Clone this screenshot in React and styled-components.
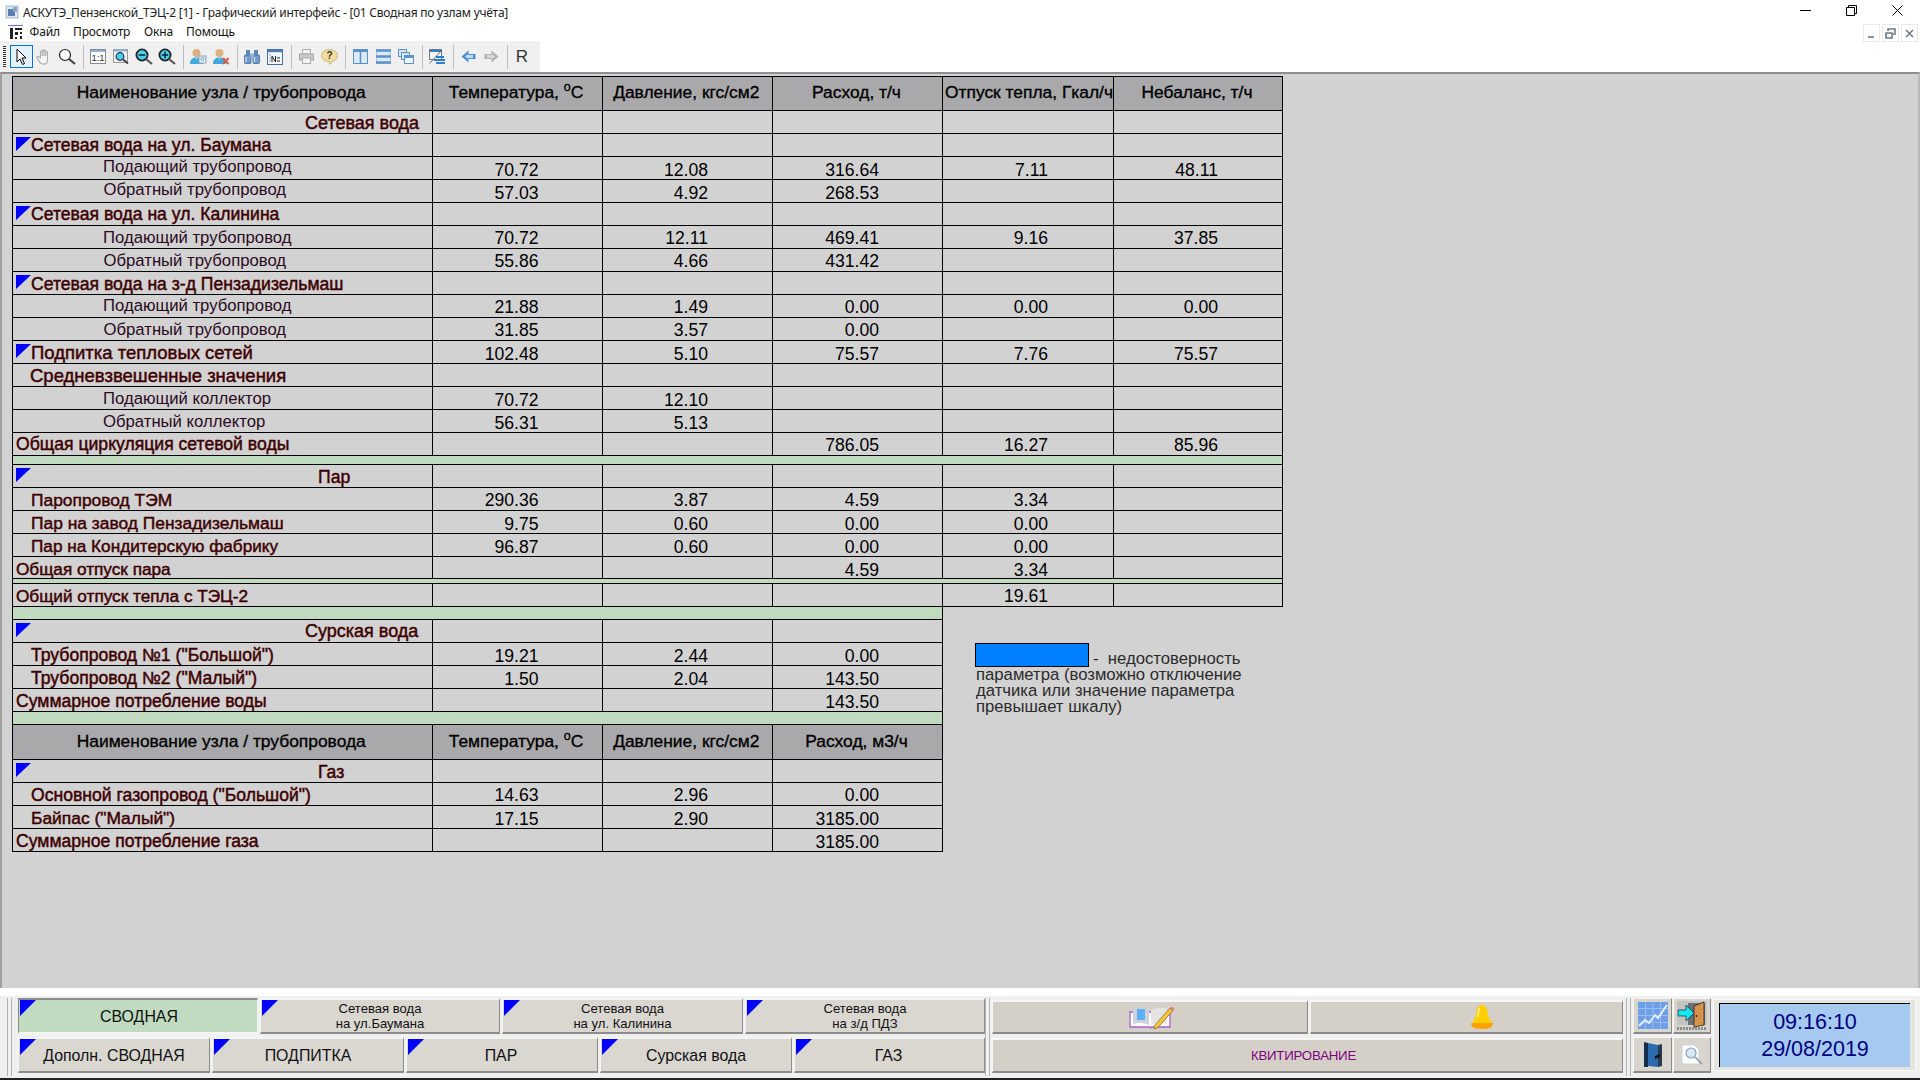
import React from 'react';
import styled, { createGlobalStyle } from 'styled-components';

const Global = createGlobalStyle`
  html, body { margin: 0; padding: 0; background: #fff; }
  body { font-family: "Liberation Sans", Arial, sans-serif; }
  * { box-sizing: border-box; }
`;

const Screen = styled.div`
  position: relative; width: 1920px; height: 1080px; overflow: hidden; background: #fff;
`;
const TitleBar = styled.div`
  display: flex; align-items: center; height: 22px; padding-left: 5px; padding-top: 2px;
  font: 12px "Noto Sans", sans-serif; color: #222;
`;
const TitleText = styled.span` margin-left: 4px; letter-spacing: -0.02em; `;
const WinControls = styled.div`
  position: absolute; top: 0; right: 0; display: flex;
`;
const WinBtn = styled.div`
  width: 46px; height: 20px; display: flex; align-items: center; justify-content: center;
`;
const MenuBar = styled.div`
  position: relative; display: flex; height: 19px; align-items: center;
  font: 12px "Noto Sans", sans-serif; color: #111; padding-left: 8px;
`;
const MenuItem = styled.span` position: absolute; left: ${p => p.$x}px; letter-spacing: -0.01em; `;
const MdiGroup = styled.div`
  position: absolute; right: 2px; top: 2px; display: flex; gap: 2px;
`;
const MdiBtn = styled.div`
  width: 17px; height: 18px; border: 1px solid #eaeaea; display: flex; align-items: center; justify-content: center;
`;
const Toolbar = styled.div`
  position: absolute; left: 0; top: 41px; width: 540px; height: 31px; background: #f0f0f0;
  display: flex; align-items: center; padding-left: 9.5px;
  &::before {
    content: ''; position: absolute; left: 3px; top: 5px; width: 3px; height: 21px;
    background: repeating-linear-gradient(to bottom, #333 0 1px, transparent 1px 2px);
  }
`;
const ToolBtn = styled.div`
  width: 23px; height: 23px; display: flex; align-items: center; justify-content: center;
  border: 1px solid ${p => p.$active ? '#0078d7' : 'transparent'};
  background: ${p => p.$active ? '#e5f1fb' : 'transparent'};
  font: 17px "Liberation Sans", sans-serif; color: #333;
`;
const ToolSep = styled.div` width: 1px; height: 24px; background: #bdbdbd; margin: 0 3px 0 4px; `;

const Workspace = styled.div`
  position: absolute; left: 0; right: 0; top: 72px; height: 916px; background: #d2d2d2;
  border-top: 2px solid #8e8e8e; border-left: 2px solid #a0a0a0; border-right: 2px solid #b8b8b8;
`;
const Grid = styled.div` position: absolute; left: 12px; top: 76px; width: 1272px; color: #000; `;
const Row = styled.div`
  position: relative; display: flex; height: ${p => p.$h}px;
  background: ${p => p.$green ? '#c0dac0' : 'transparent'};
  width: ${p => p.$short ? 931 : 1271}px;
  border-left: 1px solid #000;
  border-bottom: 1px solid #000;
  ${p => p.$top ? 'border-top: 1px solid #000;' : ''}
  ${p => p.$green ? 'border-right: 1px solid #000;' : ''}
`;
const W = [419.5, 170, 170.5, 170, 171, 169];
const Cell = styled.div`
  position: relative; flex: none; width: ${p => W[p.$c]}px; height: 100%;
  border-right: 1px solid #000; white-space: nowrap;
  background: ${p => p.$head ? '#a9a9ab' : 'transparent'};
  display: flex; align-items: center;
`;
const Value = styled.span`
  position: absolute; right: ${p => [0, 63, 64, 63, 65, 64][p.$c]}px; top: ${p => 4 + (p.$dy ?? 0)}px;
  font-size: 17.6px; line-height: 18px; color: #000;
`;
const Name = styled.span`
  position: absolute; left: ${p => p.$x - 13}px; top: ${p => 2 + (p.$dy ?? 1)}px; line-height: 18px;
  font-size: ${p => p.$fs ?? (p.$strong ? 17.6 : 16.7)}px;
  color: ${p => p.$strong ? '#3d0000' : '#2a0a1e'};
  -webkit-text-stroke: ${p => p.$strong ? '0.45px' : '0'} #3d0000;
`;
const HeadText = styled.span`
  width: 100%; text-align: center; font-size: 17.4px; color: #000; padding: 0 2px 2px 0;
  -webkit-text-stroke: 0.35px #000;
  sup { font-size: 12.5px; line-height: 0; vertical-align: 7px; }
`;
const OverflowHead = styled(HeadText)`
  text-align: left; padding: 0 0 2px 2px;
`;
const Flag = styled.i`
  position: absolute; left: ${p => p.$x}px; top: ${p => p.$y}px;
  width: ${p => p.$w ?? 16}px; height: ${p => p.$w ? p.$w - 1 : 16}px; background: #0000ff;
  clip-path: polygon(0 0, 100% 0, 0 100%);
`;

const Legend = styled.div`
  position: absolute; left: 975px; top: 643px; width: 290px; color: #2b2b2b;
  font-size: 16.7px; line-height: 15.9px;
`;
const LegendBox = styled.i`
  display: inline-block; width: 114px; height: 24px; background: #0080ff; border: 1px solid #000;
  vertical-align: top; margin-right: 4px; flex: none;
`;
const LegendFirst = styled.div` height: 24px; display: flex; align-items: flex-start; `;
const LegendDash = styled.span` padding-top: 8px; white-space: pre; `;
const LegendBody = styled.div` padding-left: 1px; white-space: nowrap; `;

const Bottom = styled.div`
  position: absolute; left: 0; right: 0; top: 996px; height: 82px; background: #f0f0f0;
`;
const Dark = styled.div` position: absolute; left: 0; right: 0; top: 1078px; height: 2px; background: #222; `;
const Grip = styled.div`
  position: absolute; left: ${p => p.$x}px; top: 2px; height: 78px; width: 5px;
  border-left: 1px solid #b4b4b4; border-right: 1px solid #b4b4b4;
`;
const TabRow = styled.div`
  position: absolute; left: 18px; top: ${p => p.$y}px; display: flex; gap: 2px;
`;
const Tab = styled.div`
  position: relative; width: ${p => p.$w}px; height: ${p => p.$h}px;
  background: ${p => p.$on ? '#c0dbc0' : '#dad7d1'};
  border-top: 2px solid ${p => p.$on ? '#8c8c8c' : '#f4f4f2'};
  border-left: 1px solid ${p => p.$on ? '#8c8c8c' : '#f4f4f2'};
  border-bottom: 2px solid ${p => p.$on ? '#f4f4f2' : '#8c8c8c'};
  border-right: 1px solid ${p => p.$on ? '#f4f4f2' : '#8c8c8c'};
  display: flex; align-items: center; justify-content: center; text-align: center;
  font-size: ${p => p.$small ? 13.1 : 15.9}px; line-height: 15px; color: #111;
  padding-left: ${p => p.$pl ?? 0}px; padding-right: ${p => p.$pr ?? 0}px;
`;
const ActionRow = styled.div`
  position: absolute; left: 992px; top: ${p => p.$y}px; display: flex; gap: 2px;
`;
const ActionBtn = styled.div`
  width: ${p => p.$w}px; height: ${p => p.$h}px; background: #d4d0c8;
  border-top: 2px solid #f6f6f4; border-left: 1px solid #f6f6f4;
  border-bottom: 2px solid #8a8a8a; border-right: 1px solid #8a8a8a;
  display: flex; align-items: center; justify-content: center;
  color: #800080; font-size: 13.3px; letter-spacing: -0.25px;
  padding-left: ${p => p.$pl ?? 0}px; padding-right: ${p => p.$pr ?? 0}px;
`;
const SmallBtns = styled.div`
  position: absolute; left: 1633px; top: 2px; width: 78px;
  display: grid; grid-template-columns: 39px 38px; grid-auto-rows: 36px; gap: 3px 1px;
`;
const SmallBtn = styled.div`
  background: #d8d5ce; border-top: 1px solid #f6f6f4; border-left: 1px solid #f6f6f4;
  border-bottom: 2px solid #8a8a8a; border-right: 1px solid #8a8a8a;
  display: flex; align-items: center; justify-content: center;
`;
const ClockOuter = styled.div`
  position: absolute; left: 1713px; top: 3px; width: 203px; height: 72px; background: #e4e4e0;
  border: 1px solid #f8f8f8; padding: 3px 5px;
`;
const Clock = styled.div`
  height: 64px; background: #a6c9f0; border-top: 1px solid #000; border-left: 1px solid #000;
  display: flex; flex-direction: column; justify-content: center; align-items: center;
  color: #000080; font-size: 21.5px; line-height: 26.5px;
`;

const Ico = styled.svg` display: block; flex: none; `;

const rows = [
  { type: 'head', h: 35, top: true },
  { h: 23, n: 'Сетевая вода', x: 305, s: 1, fs: 18 },
  { h: 23, n: 'Сетевая вода на ул. Баумана', x: 31, s: 1, flag: 1, dy: 0 },
  { h: 23, n: 'Подающий трубопровод', x: 103, v: ['70.72', '12.08', '316.64', '7.11', '48.11'], dy: -1 },
  { h: 23, n: 'Обратный трубопровод', x: 103.5, v: ['57.03', '4.92', '268.53'], dy: -1 },
  { h: 23, n: 'Сетевая вода на ул. Калинина', x: 31, s: 1, flag: 1, dy: 0 },
  { h: 23, n: 'Подающий трубопровод', x: 103, vdy: -1, v: ['70.72', '12.11', '469.41', '9.16', '37.85'] },
  { h: 23, n: 'Обратный трубопровод', x: 103.5, vdy: -1, v: ['55.86', '4.66', '431.42'] },
  { h: 23, n: 'Сетевая вода на з-д Пензадизельмаш', x: 31, s: 1, flag: 1 },
  { h: 23, n: 'Подающий трубопровод', x: 103, dy: 0, vdy: -1, v: ['21.88', '1.49', '0.00', '0.00', '0.00'] },
  { h: 23, n: 'Обратный трубопровод', x: 103.5, vdy: -1, v: ['31.85', '3.57', '0.00'] },
  { h: 23, n: 'Подпитка тепловых сетей', x: 31, s: 1, fs: 18.5, flag: 1, v: ['102.48', '5.10', '75.57', '7.76', '75.57'] },
  { h: 23, n: 'Средневзвешенные значения', x: 30, s: 1, fs: 18.5 },
  { h: 23, n: 'Подающий коллектор', x: 103, v: ['70.72', '12.10'] },
  { h: 23, n: 'Обратный коллектор', x: 103, v: ['56.31', '5.13'] },
  { h: 23, n: 'Общая циркуляция сетевой воды', x: 16, s: 1, dy: 0, vdy: -1, v: ['', '', '786.05', '16.27', '85.96'] },
  { type: 'green', h: 9 },
  { h: 23, n: 'Пар', x: 318, s: 1, flag: 1 },
  { h: 23, n: 'Паропровод ТЭМ', x: 31, s: 1, fs: 17.4, vdy: -1, v: ['290.36', '3.87', '4.59', '3.34'] },
  { h: 23, n: 'Пар на завод Пензадизельмаш', x: 31, s: 1, fs: 17.4, v: ['9.75', '0.60', '0.00', '0.00'] },
  { h: 23, n: 'Пар на Кондитерскую фабрику', x: 31, s: 1, fs: 17.2, v: ['96.87', '0.60', '0.00', '0.00'] },
  { h: 22, n: 'Общая отпуск пара', x: 16, s: 1, fs: 17.2, v: ['', '', '4.59', '3.34'] },
  { type: 'green', h: 5 },
  { h: 23, n: 'Общий отпуск тепла с ТЭЦ-2', x: 16, s: 1, fs: 17.2, vdy: -1, v: ['', '', '', '19.61'] },
  { type: 'green', h: 13, short: 1 },
  { h: 23, n: 'Сурская вода', x: 305, s: 1, fs: 18, flag: 1, short: 1, dy: 0 },
  { h: 23, n: 'Трубопровод №1 ("Большой")', x: 31, s: 1, short: 1, v: ['19.21', '2.44', '0.00'] },
  { h: 23, n: 'Трубопровод №2 ("Малый")', x: 31, s: 1, short: 1, v: ['1.50', '2.04', '143.50'] },
  { h: 23, n: 'Суммарное потребление воды', x: 16, s: 1, short: 1, v: ['', '', '143.50'] },
  { type: 'green', h: 13, short: 1 },
  { type: 'head2', h: 35 },
  { h: 23, n: 'Газ', x: 318, s: 1, flag: 1, short: 1 },
  { h: 23, n: 'Основной газопровод ("Большой")', x: 31, s: 1, short: 1, vdy: -1, v: ['14.63', '2.96', '0.00'] },
  { h: 23, n: 'Байпас ("Малый")', x: 31, s: 1, fs: 17.4, short: 1, v: ['17.15', '2.90', '3185.00'] },
  { h: 23, n: 'Суммарное потребление газа', x: 16, s: 1, short: 1, v: ['', '', '3185.00'] },
];

function TableRow({ r }) {
  if (r.type === 'green') return <Row $h={r.h} $green $short={r.short} />;
  if (r.type === 'head' || r.type === 'head2') {
    const short = r.type === 'head2';
    return (
      <Row $h={r.h} $short={short} $top={r.top}>
        <Cell $c={0} $head><HeadText>Наименование узла / трубопровода</HeadText></Cell>
        <Cell $c={1} $head><HeadText>Температура, <sup>o</sup>C</HeadText></Cell>
        <Cell $c={2} $head><HeadText>Давление, кгс/см2</HeadText></Cell>
        <Cell $c={3} $head><HeadText>{short ? 'Расход, м3/ч' : 'Расход, т/ч'}</HeadText></Cell>
        {!short && <Cell $c={4} $head><OverflowHead>Отпуск тепла, Гкал/ч</OverflowHead></Cell>}
        {!short && <Cell $c={5} $head><HeadText>Небаланс, т/ч</HeadText></Cell>}
      </Row>
    );
  }
  const count = r.short ? 4 : 6;
  return (
    <Row $h={r.h} $short={r.short}>
      <Cell $c={0}>
        {r.flag && <Flag $x={2.5} $y={3} $w={15.5} />}
        <Name $x={r.x} $strong={r.s} $dy={r.dy} $fs={r.fs}>{r.n}</Name>
      </Cell>
      {Array.from({ length: count - 1 }, (_, i) => (
        <Cell key={i} $c={i + 1}>{r.v && r.v[i] ? <Value $c={i + 1} $dy={r.vdy}>{r.v[i]}</Value> : null}</Cell>
      ))}
    </Row>
  );
}

const IconCursor = () => (
  <Ico width="16" height="18" viewBox="0 0 16 18"><path d="M4 1v13l3-3 2.5 5.5 2-1L9 10h4z" fill="#fff" stroke="#000" strokeWidth="1" /></Ico>
);
const IconHand = () => (
  <Ico width="16" height="18" viewBox="0 0 18 20"><path d="M5 11V4.5a1 1 0 0 1 2 0V9V3a1 1 0 0 1 2 0v6V3.5a1 1 0 0 1 2 0V9V5a1 1 0 0 1 2 0v8c0 3-2 5-5 5-2.500 0-3.500-1-5-4l-2-3.500c-.5-1 .8-1.800 1.500-1z" fill="#f4f4f4" stroke="#a8a8a8" strokeWidth="1.200" /></Ico>
);
const Lens = ({ fill = 'none', ring = '#222', sign }) => (
  <Ico width="18" height="17" viewBox="0 0 18 17">
    <circle cx="7" cy="7" r={fill === 'none' ? 5.5 : 5.6} fill={fill === 'none' ? '#fff' : fill} stroke={ring} strokeWidth={fill === 'none' ? 1.2 : 1.8} />
    <path d="M11 11l6 5" stroke={fill === 'none' ? '#444' : '#555'} strokeWidth="2.200" />
    {sign === '-' && <path d="M3.800 7h6.400" stroke="#123" strokeWidth="1.500" />}
    {sign === '+' && <path d="M3.800 7h6.400M7 3.800v6.400" stroke="#123" strokeWidth="1.500" />}
  </Ico>
);
const Icon11 = () => (
  <Ico width="16" height="15" viewBox="0 0 16 15">
    <rect x=".5" y=".5" width="15" height="14" fill="#fff" stroke="#8a8a8a" />
    <path d="M1 2h14" stroke="#8fb4dc" strokeWidth="2" />
    <text x="8" y="12" textAnchor="middle" fontSize="9.500" fontFamily="Liberation Sans" fill="#333">1:1</text>
  </Ico>
);
const IconZoomPage = () => (
  <Ico width="16" height="15" viewBox="0 0 16 15">
    <rect x=".5" y=".5" width="14" height="13" fill="#eee" stroke="#9a9a9a" />
    <path d="M1 1.500h13" stroke="#8fb4dc" strokeWidth="2" />
    <circle cx="7" cy="7.500" r="3.800" fill="#4ccfee" stroke="#234" strokeWidth="1.200" />
    <path d="M10 10.500l5 4" stroke="#444" strokeWidth="2" />
  </Ico>
);
const Person = ({ extra }) => (
  <Ico width="18" height="17" viewBox="0 0 18 17">
    <circle cx="7.500" cy="5" r="4" fill="#dcb080" />
    <path d="M1 16c0-4 2-6.500 6.500-6.500S13 12 14 16z" fill="#3fa8dc" />
    <path d="M7 10l.5 2 .5-2z" fill="#fff" />
    {extra === 'x' && <path d="M11 10l5.500 6M16.500 10L11 16" stroke="#d0604a" strokeWidth="2" />}
    {extra === 'k' && <g><rect x="10" y="8" width="7" height="7" fill="#eaf0f8" stroke="#8aa6c8" /><circle cx="13.500" cy="11" r="1.500" fill="none" stroke="#7a9ac0" /></g>}
  </Ico>
);
const IconBinoc = () => (
  <Ico width="16" height="15" viewBox="0 0 16 15">
    <rect x=".5" y="6" width="6.500" height="8.500" rx="1" fill="#6f9cc8" stroke="#3c6c9c" strokeWidth=".8" />
    <rect x="9" y="6" width="6.500" height="8.500" rx="1" fill="#6f9cc8" stroke="#3c6c9c" strokeWidth=".8" />
    <rect x="2" y="1" width="4" height="5.500" fill="#5a88b8" />
    <rect x="10" y="1" width="4" height="5.500" fill="#5a88b8" />
    <rect x="6.500" y="4" width="3" height="5" fill="#9ab8d4" />
    <path d="M2 8v5M10.500 8v5" stroke="#d8e6f2" strokeWidth="1.200" />
  </Ico>
);
const IconNo = () => (
  <Ico width="16" height="16" viewBox="0 0 16 16">
    <rect x=".5" y=".5" width="15" height="15" fill="#f3f6fa" stroke="#4a6f9a" />
    <path d="M1 2h14" stroke="#4a7db4" strokeWidth="2.400" />
    <path d="M5 13V7l3.500 6V7" stroke="#222" fill="none" />
    <path d="M10 9h3M10 12h3" stroke="#222" />
    <path d="M2 6h2M2 9h2M2 12h2" stroke="#8aa8c8" />
  </Ico>
);
const IconPrint = () => (
  <Ico width="15" height="15" viewBox="0 0 15 15">
    <rect x="3.500" y=".5" width="8" height="4.500" fill="#f4f4f4" stroke="#aaa" />
    <rect x=".5" y="5" width="14" height="6" fill="#c8c8c8" stroke="#a8a8a8" />
    <rect x="3.500" y="9" width="8" height="5.500" fill="#f4f4f4" stroke="#aaa" />
  </Ico>
);
const IconHelp = () => (
  <Ico width="17" height="16" viewBox="0 0 17 16">
    <path d="M8.500.5c4.500 0 8 2.500 8 6s-2.500 5-4.800 5.800L8.500 15.500V12.500C4 12.500.5 10 .5 6.500S4 .5 8.500.5z" fill="#f2dd9a" stroke="#c8b880" />
    <text x="8.500" y="10" textAnchor="middle" fontSize="10" fontWeight="700" fontFamily="Liberation Sans" fill="#333">?</text>
  </Ico>
);
const IconCols = () => (
  <Ico width="15" height="15" viewBox="0 0 15 15">
    <rect x=".5" y=".5" width="14" height="14" fill="#dbe8f6" stroke="#5b93c9" />
    <path d="M1 2h13" stroke="#5b93c9" strokeWidth="2" /><path d="M7.500 1v13" stroke="#5b93c9" strokeWidth="1.600" />
  </Ico>
);
const IconRows = () => (
  <Ico width="15" height="15" viewBox="0 0 15 15">
    <rect x=".5" y=".5" width="14" height="14" fill="#dbe8f6" stroke="#aac4de" />
    <path d="M0 1.500h15M0 7.500h15M0 13.500h15" stroke="#5b93c9" strokeWidth="2.600" />
  </Ico>
);
const IconCascade = () => (
  <Ico width="16" height="15" viewBox="0 0 16 15">
    <rect x=".5" y=".5" width="8" height="7" fill="#d6e6f6" stroke="#5b93c9" />
    <rect x="3.500" y="3.500" width="8" height="7" fill="#d6e6f6" stroke="#5b93c9" />
    <rect x="6.500" y="6.500" width="9" height="8" fill="#eef5fc" stroke="#5b93c9" />
    <path d="M7 8h8" stroke="#5b93c9" strokeWidth="2" />
  </Ico>
);
const IconSwitch = () => (
  <Ico width="16" height="15" viewBox="0 0 16 15">
    <rect x=".5" y=".5" width="12" height="10" fill="#f4f4f4" stroke="#777" />
    <path d="M1 2h11" stroke="#2c7fd0" strokeWidth="2" />
    <path d="M.5 14.500L13 1" stroke="#666" />
    <path d="M7 8h8M5 11h11M7 14h9" stroke="#2c7fd0" strokeWidth="2" />
  </Ico>
);
const IconBack = ({ c = '#4b8fd0', flip }) => (
  <Ico width="15" height="13" viewBox="0 0 15 13" style={flip ? { transform: 'scaleX(-1)' } : undefined}>
    <path d="M.5 6.500l7-6V4h7v5h-7v3.500z" fill={c} />
    <path d="M4 6.500l3-2.500v1h5v3H7v1z" fill={flip ? '#d8d8d8' : '#bcdcf6'} />
  </Ico>
);
const IconBook = () => (
  <Ico width="46" height="25" viewBox="0 0 46 25">
    <path d="M1 7h40v15H23l-1 1-1-1H1z" fill="#fff" stroke="#a860c8" strokeWidth="1.300" />
    <path d="M4 3c6-2 12-1 16 2v15c-4-2-10-3-16-1z" fill="#cdd2dc" />
    <path d="M8 4h8v11H8z" fill="#5cb0f6" />
    <path d="M22 5c5-3 11-3 16-2v16c-5-1-11-1-16 1z" fill="#e4e4e4" />
    <path d="M25 21L41 3l3 2.500-15 17-4 1.500z" fill="#f3c43c" stroke="#7a6420" strokeWidth=".7" />
    <path d="M40.500 3.500l3.500 2.500 1.500-2-3-2.500z" fill="#e87878" />
  </Ico>
);
const IconBell = () => (
  <Ico width="22" height="24" viewBox="0 0 22 24">
    <path d="M11 0c3.500 0 5 2 5.500 7 .4 4 2 7 4.500 11H1c2.500-4 4.100-7 4.500-11C6 2 7.500 0 11 0z" fill="#ffd000" />
    <path d="M8.500 3c-.8 2-1 6-2 9" stroke="#ffec80" strokeWidth="1.800" fill="none" />
    <path d="M0 18h22c0 3-2 6-11 6S0 21 0 18z" fill="#ffa200" />
  </Ico>
);
const IconChart = () => (
  <Ico width="30" height="27" viewBox="0 0 30 27">
    <rect width="30" height="27" fill="#6e9fe8" />
    <path d="M0 6.500h30M0 13.500h30M0 20.500h30M7.500 0v27M15 0v27M22.500 0v27" stroke="#9abcf0" />
    <path d="M1 24l6-6 4 3 6-8 3 3 9-13" fill="none" stroke="#e8f2ff" strokeWidth="1.800" />
  </Ico>
);
const IconExit = () => (
  <Ico width="30" height="29" viewBox="0 0 30 29">
    <rect x="0" y="0" width="30" height="24" fill="#c4c4c0" />
    <rect x="11" y="2" width="17" height="22" fill="#6c7078" />
    <path d="M17 5l10-4v23l-10 2z" fill="#d8924a" stroke="#222" strokeWidth=".8" />
    <circle cx="19.500" cy="15" r=".9" fill="#222" />
    <path d="M1 9h8V4l8 8-8 8v-5H1z" fill="#12e8ee" stroke="#223" strokeWidth=".7" />
    <path d="M0 27.500h30" stroke="#8a8a8a" strokeWidth="3" strokeDasharray="2 1" />
  </Ico>
);
const IconDoor = () => (
  <Ico width="20" height="27" viewBox="0 0 20 27">
    <path d="M1 1l4 1v24H1z" fill="#152c4c" />
    <path d="M5 2l10 2v22l-10-1z" fill="#2c6cae" />
    <path d="M15 4l4-1v22l-4 1z" fill="#2a3a4c" />
    <path d="M12 15l5-2v3l-5 2z" fill="#111" />
  </Ico>
);
const IconDoc = () => (
  <Ico width="22" height="21" viewBox="0 0 22 21">
    <path d="M1 1h12l5 4v15H1z" fill="#fff" stroke="#c8d2dc" />
    <circle cx="10" cy="9" r="5" fill="#d8e8f4" stroke="#8aa4bc" strokeWidth="1.200" />
    <path d="M14 13l7 7" stroke="#9aa8b4" strokeWidth="2" />
  </Ico>
);
const AppIcon = () => (
  <Ico width="14" height="14" viewBox="0 0 14 14">
    <rect x="1" y="1" width="12" height="12" fill="#dfe6ee" stroke="#a8b8c8" />
    <rect x="3" y="4" width="7" height="7" fill="#5a80b0" />
    <rect x="8" y="2" width="4" height="5" fill="#8aa8c8" />
  </Ico>
);
const MenuIcon = () => (
  <Ico width="16" height="14" viewBox="0 0 16 14">
    <path d="M0 0h15" stroke="#2040d0" strokeWidth="1.400" />
    <path d="M2 3h3v11H2zM7 3h7v2H7zM7 7h3v3H7zM12 7h2v2h-2zM7 12h2v2H7zM12 11h2v3h-2z" fill="#222" />
  </Ico>
);
const Mdi = ({ d }) => (
  <Ico width="11" height="11" viewBox="0 0 11 11"><path d={d} stroke="#6b7b8c" strokeWidth="1.600" fill="none" /></Ico>
);

export default function App() {
  return (
    <Screen>
      <Global />
      <TitleBar>
        <AppIcon />
        <TitleText>АСКУТЭ_Пензенской_ТЭЦ-2 [1] - Графический интерфейс - [01 Сводная по узлам учёта]</TitleText>
      </TitleBar>
      <WinControls>
        <WinBtn><Ico width="11" height="11" viewBox="0 0 11 11"><path d="M0 5.500h11" stroke="#000" /></Ico></WinBtn>
        <WinBtn><Ico width="11" height="11" viewBox="0 0 11 11"><path d="M.5 2.500h8v8h-8zM2.500 2.500v-2h8v8h-2" stroke="#000" fill="none" /></Ico></WinBtn>
        <WinBtn><Ico width="11" height="11" viewBox="0 0 11 11"><path d="M.5.500l10 10M10.500.500l-10 10" stroke="#000" /></Ico></WinBtn>
      </WinControls>
      <MenuBar>
        <MenuIcon />
        <MenuItem $x={29.5}>Файл</MenuItem>
        <MenuItem $x={73}>Просмотр</MenuItem>
        <MenuItem $x={144}>Окна</MenuItem>
        <MenuItem $x={186}>Помощь</MenuItem>
        <MdiGroup>
          <MdiBtn><Mdi d="M2 9h6" /></MdiBtn>
          <MdiBtn><Mdi d="M1 5h6v5H1zM3 3V1h7v5H8" /></MdiBtn>
          <MdiBtn><Mdi d="M2 2l7 7M9 2l-7 7" /></MdiBtn>
        </MdiGroup>
      </MenuBar>
      <Toolbar>
        <ToolBtn $active><IconCursor /></ToolBtn>
        <ToolBtn><IconHand /></ToolBtn>
        <ToolBtn><Lens /></ToolBtn>
        <ToolSep />
        <ToolBtn><Icon11 /></ToolBtn>
        <ToolBtn><IconZoomPage /></ToolBtn>
        <ToolBtn><Lens fill="#4ccfee" sign="-" /></ToolBtn>
        <ToolBtn><Lens fill="#4ccfee" sign="+" /></ToolBtn>
        <ToolSep />
        <ToolBtn><Person extra="k" /></ToolBtn>
        <ToolBtn><Person extra="x" /></ToolBtn>
        <ToolSep />
        <ToolBtn><IconBinoc /></ToolBtn>
        <ToolBtn><IconNo /></ToolBtn>
        <ToolSep />
        <ToolBtn><IconPrint /></ToolBtn>
        <ToolBtn><IconHelp /></ToolBtn>
        <ToolSep />
        <ToolBtn><IconCols /></ToolBtn>
        <ToolBtn><IconRows /></ToolBtn>
        <ToolBtn><IconCascade /></ToolBtn>
        <ToolSep />
        <ToolBtn><IconSwitch /></ToolBtn>
        <ToolSep />
        <ToolBtn><IconBack /></ToolBtn>
        <ToolBtn><IconBack c="#b0b0b0" flip /></ToolBtn>
        <ToolSep />
        <ToolBtn>R</ToolBtn>
      </Toolbar>
      <Workspace />
      <Grid>
        {rows.map((r, i) => <TableRow key={i} r={r} />)}
      </Grid>
      <Legend>
        <LegendFirst><LegendBox /><LegendDash>-  недостоверность</LegendDash></LegendFirst>
        <LegendBody>параметра (возможно отключение<br />датчика или значение параметра<br />превышает шкалу)</LegendBody>
      </Legend>
      <Bottom>
        <Grip $x={7} />
        <TabRow $y={2}>
          <Tab $w={240} $h={36} $on $pl={2}><Flag $x={1} $y={0} />СВОДНАЯ</Tab>
          <Tab $w={240} $h={36} $small><Flag $x={1} $y={0} />Сетевая вода<br />на ул.Баумана</Tab>
          <Tab $w={241} $h={36} $small><Flag $x={1} $y={0} />Сетевая вода<br />на ул. Калинина</Tab>
          <Tab $w={240} $h={36} $small><Flag $x={1} $y={0} />Сетевая вода<br />на з/д ПДЗ</Tab>
        </TabRow>
        <TabRow $y={41}>
          <Tab $w={192} $h={36}><Flag $x={1} $y={0} />Дополн. СВОДНАЯ</Tab>
          <Tab $w={192} $h={36}><Flag $x={1} $y={0} />ПОДПИТКА</Tab>
          <Tab $w={192} $h={36} $pr={2}><Flag $x={1} $y={0} />ПАР</Tab>
          <Tab $w={192} $h={36}><Flag $x={1} $y={0} />Сурская вода</Tab>
          <Tab $w={191} $h={36} $pr={2}><Flag $x={1} $y={0} />ГАЗ</Tab>
        </TabRow>
        <Grip $x={985} />
        <ActionRow $y={4}>
          <ActionBtn $w={316} $h={34} $pl={4}><IconBook /></ActionBtn>
          <ActionBtn $w={313} $h={34} $pl={30}><IconBell /></ActionBtn>
        </ActionRow>
        <ActionRow $y={42}>
          <ActionBtn $w={631} $h={35} $pr={8}>КВИТИРОВАНИЕ</ActionBtn>
        </ActionRow>
        <Grip $x={1626} />
        <SmallBtns>
          <SmallBtn><IconChart /></SmallBtn>
          <SmallBtn><IconExit /></SmallBtn>
          <SmallBtn><IconDoor /></SmallBtn>
          <SmallBtn><IconDoc /></SmallBtn>
        </SmallBtns>
        <ClockOuter>
          <Clock><span>09:16:10</span><span>29/08/2019</span></Clock>
        </ClockOuter>
      </Bottom>
      <Dark />
    </Screen>
  );
}
